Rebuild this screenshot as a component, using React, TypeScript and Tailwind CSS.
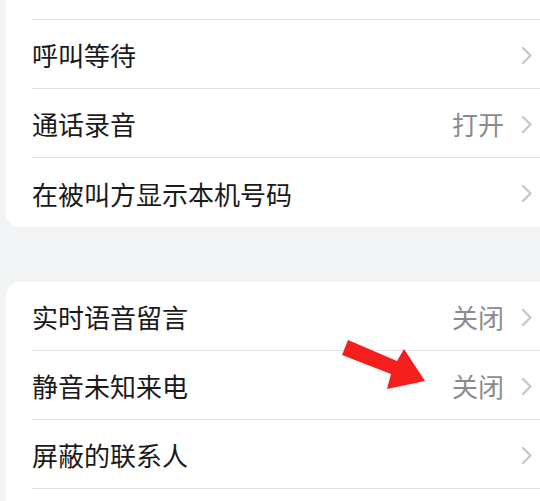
import React from "react";

type Row = {
    label: string;
    value?: string;
};

const topGroup: Row[] = [
    { label: "呼叫转移" },
    { label: "呼叫等待" },
    { label: "通话录音", value: "打开" },
    { label: "在被叫方显示本机号码" }
];

const bottomGroup: Row[] = [
    { label: "实时语音留言", value: "关闭" },
    { label: "静音未知来电", value: "关闭" },
    { label: "屏蔽的联系人" },
    { label: "" }
];

function Chevron() {
    return (
        <svg width="12" height="19" viewBox="0 0 12 19" fill="none">
            <path
                d="M2 2 L9.5 9.5 L2 17"
                stroke="#c7c7c9"
                strokeWidth="2.4"
                strokeLinecap="round"
                strokeLinejoin="round"
            />
        </svg>
    );
}

function SettingsRow({ row, last }: { row: Row; last: boolean }) {
    return (
        <div
            className={`h-[69px] ml-[26px] pr-[33px] pt-[2px] flex items-center justify-between ${
                last ? "" : "border-b border-[#e3e3e6]"
            }`}
        >
            <span className="text-[26px] leading-none text-[#1a1a1a]">{row.label}</span>
            <div className="flex items-center gap-[17px]">
                {row.value && (
                    <span className="text-[26px] leading-none text-[#8b8b8e]">{row.value}</span>
                )}
                <Chevron />
            </div>
        </div>
    );
}

function Group({ rows, className }: { rows: Row[]; className: string }) {
    return (
        <div className={`ml-[6px] w-[560px] bg-white rounded-[14px] ${className}`}>
            {rows.map((row, i) => (
                <SettingsRow key={i} row={row} last={i == rows.length - 1} />
            ))}
        </div>
    );
}

export default function App() {
    return (
        <div
            className="relative w-[540px] h-[501px] overflow-hidden bg-[#f2f3f5]"
            style={{ fontFamily: '"Noto Sans CJK SC", "Noto Sans", sans-serif' }}
        >
            <Group rows={topGroup} className="mt-[-49px]" />
            <Group rows={bottomGroup} className="mt-[55px]" />

            {/* red annotation arrow */}
            <svg
                className="absolute left-0 top-0"
                width="540"
                height="501"
                viewBox="0 0 540 501"
            >
                <polygon
                    points="348,340 397,361 404,349 425,381 387,389 391,374 342,355"
                    fill="#f41f1c"
                />
            </svg>
        </div>
    );
}
